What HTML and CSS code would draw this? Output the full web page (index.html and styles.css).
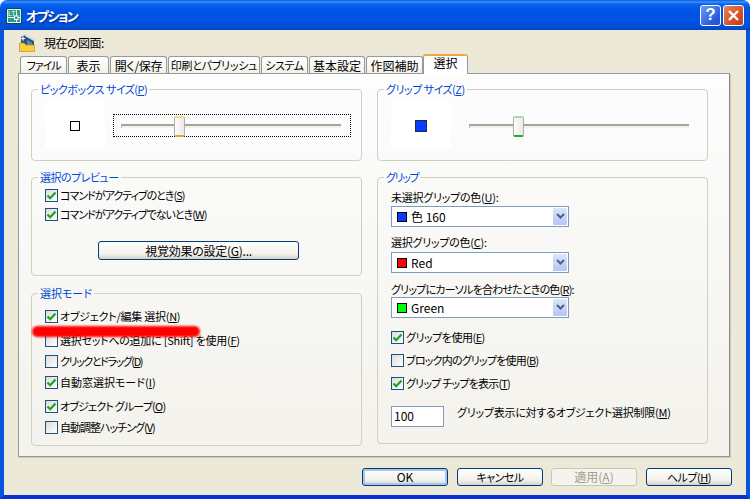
FILE: index.html
```html
<!DOCTYPE html>
<html lang="ja">
<head>
    <meta charset="UTF-8">
    <title>オプション</title>
    <link rel="stylesheet" href="styles.css">
</head>
<body>
    <svg class="defs" width="0" height="0">
        <symbol id="check" viewBox="0 0 11 11">
            <path d="M1.5 5.5 L4.2 8.2 L9.5 2.5" fill="none" stroke="#21a121" stroke-width="2.2"/>
        </symbol>
        <symbol id="chevron" viewBox="0 0 9 7">
            <path d="M1 1 L4.5 4.5 L8 1" fill="none" stroke="#4d6185" stroke-width="2"/>
        </symbol>
    </svg>

    <div class="window">
        <div class="titlebar">
            <svg class="app-icon" width="16" height="16" viewBox="0 0 16 16">
                <rect x="0.5" y="0.5" width="15" height="15" fill="#2a9c8e" stroke="#0f4a5c"/>
                <path d="M1.5 1.5 H14.5 V14.5 H1.5 Z M10.5 1 V15 M1 9.5 H15" fill="none" stroke="#e8f4f0"/>
                <text x="2" y="8" font-size="7" font-family="Liberation Sans" fill="#fff">LT</text>
                <rect x="8.5" y="8" width="3.5" height="3.5" fill="#2a9c8e" stroke="#fff"/>
            </svg>
            <span class="title-text">オプション</span>
            <div class="caption-btn caption-help">?</div>
            <div class="caption-btn caption-close">
                <svg width="13" height="13" viewBox="0 0 13 13">
                    <path d="M2 2 L11 11 M11 2 L2 11" stroke="#fff" stroke-width="2.4"/>
                </svg>
            </div>
        </div>

        <div class="client">
            <div class="drawing-row">
                <svg class="folder-icon" width="16" height="17" viewBox="0 0 16 17">
                    <path d="M2 2 L6 0 L15 5 V11 H2 Z" fill="#2a5580"/>
                    <path d="M6 0.5 L15 5.5" stroke="#d8e0e8" stroke-width="1.4"/>
                    <path d="M4 1.5 V5.5 M2 3.5 H6" stroke="#fff" stroke-width="1.2"/>
                    <path d="M8 5 L13 7.5 V10 H8 Z" fill="#5f86ad"/>
                    <path d="M0.5 8 H5 L7 10 H15.5 V16.5 H0.5 Z" fill="#f7d040" stroke="#b18a12" stroke-width="0.6"/>
                </svg>
                <span class="sp-5">現在の図面:</span>
            </div>

            <div class="tabs">
                <div class="tab small sp-10">ファイル</div>
                <div class="tab">表示</div>
                <div class="tab sp-2">開く/保存</div>
                <div class="tab small sp-2">印刷とパブリッシュ</div>
                <div class="tab small sp-5">システム</div>
                <div class="tab">基本設定</div>
                <div class="tab">作図補助</div>
                <div class="tab tab-active">選択</div>
            </div>

            <div class="panel">
                <div class="column">
                    <fieldset class="group group-size">
                        <legend class="small sp-5">ピックボックス サイズ(<u>P</u>)</legend>
                        <div class="size-body">
                            <div class="preview"><div class="pickbox"></div></div>
                            <div class="slider slider-focus">
                                <div class="track"></div>
                                <div class="thumb thumb-orange" style="left: 60px"></div>
                            </div>
                        </div>
                    </fieldset>

                    <fieldset class="group group-preview">
                        <legend class="small sp-5">選択のプレビュー</legend>
                        <div class="group-body rows">
                            <label class="check-row small sp-10"><span class="box"><svg width="11" height="11"><use href="#check"/></svg></span>コマンドがアクティブのとき(<u>S</u>)</label>
                            <label class="check-row small sp-10"><span class="box"><svg width="11" height="11"><use href="#check"/></svg></span>コマンドがアクティブでないとき(<u>W</u>)</label>
                            <button class="btn btn-effects sp-2">視覚効果の設定(<u>G</u>)...</button>
                        </div>
                    </fieldset>

                    <fieldset class="group group-mode">
                        <legend class="small">選択モード</legend>
                        <div class="group-body mode-rows">
                            <label class="check-row small sp-2"><span class="box"><svg width="11" height="11"><use href="#check"/></svg></span>オブジェクト/編集 選択(<u>N</u>)</label>
                            <label class="check-row small sp-2"><span class="box"></span>選択セットへの追加に [Shift] を使用(<u>F</u>)</label>
                            <label class="check-row small sp-14"><span class="box"></span>クリックとドラッグ(<u>D</u>)</label>
                            <label class="check-row small"><span class="box"><svg width="11" height="11"><use href="#check"/></svg></span>自動窓選択モード(<u>I</u>)</label>
                            <label class="check-row small sp-8"><span class="box"><svg width="11" height="11"><use href="#check"/></svg></span>オブジェクト グループ(<u>O</u>)</label>
                            <label class="check-row small sp-10"><span class="box"></span>自動調整ハッチング(<u>V</u>)</label>
                        </div>
                        <div class="red-mark"></div>
                    </fieldset>
                </div>

                <div class="column">
                    <fieldset class="group group-size">
                        <legend class="small sp-5">グリップ サイズ(<u>Z</u>)</legend>
                        <div class="size-body">
                            <div class="preview"><div class="gripbox"></div></div>
                            <div class="slider slider-plain">
                                <div class="track"></div>
                                <div class="thumb thumb-green" style="left: 51px"></div>
                            </div>
                        </div>
                    </fieldset>

                    <fieldset class="group group-grip">
                        <legend class="small sp-14">グリップ</legend>
                        <div class="group-body">
                            <div class="field">
                                <div class="field-label small sp-2">未選択グリップの色(<u>U</u>):</div>
                                <div class="combo">
                                    <span class="swatch swatch-blue"></span><span>色 160</span>
                                    <span class="drop"><svg width="9" height="7"><use href="#chevron"/></svg></span>
                                </div>
                            </div>
                            <div class="field field-second">
                                <div class="field-label small sp-2">選択グリップの色(<u>C</u>):</div>
                                <div class="combo">
                                    <span class="swatch swatch-red"></span><span>Red</span>
                                    <span class="drop"><svg width="9" height="7"><use href="#chevron"/></svg></span>
                                </div>
                            </div>
                            <div class="field field-third">
                                <div class="field-label small sp-8">グリップにカーソルを合わせたときの色(<u>R</u>):</div>
                                <div class="combo">
                                    <span class="swatch swatch-green"></span><span>Green</span>
                                    <span class="drop"><svg width="9" height="7"><use href="#chevron"/></svg></span>
                                </div>
                            </div>
                            <div class="grip-checks">
                                <label class="check-row small sp-5"><span class="box"><svg width="11" height="11"><use href="#check"/></svg></span>グリップを使用(<u>E</u>)</label>
                                <label class="check-row small sp-8"><span class="box"></span>ブロック内のグリップを使用(<u>B</u>)</label>
                                <label class="check-row small sp-8"><span class="box"><svg width="11" height="11"><use href="#check"/></svg></span>グリップ チップを表示(<u>T</u>)</label>
                            </div>
                            <div class="limit-row">
                                <div class="number-box">100</div>
                                <div class="limit-label small sp-2">グリップ表示に対するオブジェクト選択制限(<u>M</u>)</div>
                            </div>
                        </div>
                    </fieldset>
                </div>
            </div>

            <div class="actions">
                <button class="btn btn-action btn-default">OK</button>
                <button class="btn btn-action small sp-5">キャンセル</button>
                <button class="btn btn-action btn-disabled">適用(<u>A</u>)</button>
                <button class="btn btn-action small sp-5">ヘルプ(<u>H</u>)</button>
            </div>
        </div>
    </div>
</body>
</html>
```

FILE: styles.css
```css
* {
    box-sizing: border-box;
}

body {
    margin: 0;
    background: #fff;
    font-family: "Noto Sans CJK JP", sans-serif;
    font-feature-settings: "palt";
    font-size: 12px;
    line-height: 14px;
    color: #000;
}

.defs {
    position: absolute;
}

/* title bar */
.window {
    width: 750px;
    height: 499px;
    display: flex;
    flex-direction: column;
    overflow: hidden;
}

.titlebar {
    height: 30px;
    flex: none;
    display: flex;
    align-items: center;
    padding: 0 6px 0 6px;
    border-radius: 7px 7px 0 0;
    background: linear-gradient(to bottom, #0a5ae0 0, #3a93ff 2px, #0a63ee 4px, #0055e5 10px, #0054e3 20px, #0050da 26px, #0046c4 30px);
}

.app-icon {
    margin-top: 1px;
}

.title-text {
    margin-left: 4px;
    padding-top: 2px;
    flex: 1;
    color: #fff;
    font-size: 13px;
    font-weight: 700;
    letter-spacing: -1.5px;
    text-shadow: 1px 1px 1px #0a2a80;
}

.caption-btn {
    width: 21px;
    height: 21px;
    display: flex;
    align-items: center;
    justify-content: center;
    border: 1px solid #fff;
    border-radius: 3px;
}

.caption-help {
    background: linear-gradient(135deg, #6f9cf5, #2c5de0 70%, #2450c8);
    color: #fff;
    font-family: "Liberation Sans", sans-serif;
    font-size: 17px;
    font-weight: 700;
}

.caption-close {
    margin-left: 2px;
    background: linear-gradient(135deg, #e8855f, #d5502a 60%, #c03c18);
}

/* dialog body */
.client {
    flex: 1;
    display: flex;
    flex-direction: column;
    padding: 0 16px 8px 14px;
    background: #ece9d8;
    border-left: 4px solid #0855dd;
    border-right: 4px solid #0855dd;
    border-bottom: 4px solid #0831d9;
}

.drawing-row {
    height: 24px;
    display: flex;
    align-items: center;
    margin-left: 1px;
    padding-top: 2px;
}

.folder-icon {
    margin-right: 9px;
}

.tabs {
    height: 19px;
    display: flex;
    align-items: flex-end;
    gap: 1px;
    padding-left: 2px;
}

.tab {
    height: 17px;
    text-align: center;
    border: 1px solid #919b9c;
    border-bottom: none;
    border-radius: 3px 3px 0 0;
    background: linear-gradient(to bottom, #fff, #f3f1e7);
    line-height: 17px;
    white-space: nowrap;
}

.tab:nth-child(1) { width: 47px; }
.tab:nth-child(2) { width: 41px; }
.tab:nth-child(3) { width: 57px; }
.tab:nth-child(4) { width: 92px; }
.tab:nth-child(5) { width: 47px; }
.tab:nth-child(6) { width: 56px; }
.tab:nth-child(7) { width: 57px; }

.tab-active {
    width: 45px;
    height: 20px;
    margin-bottom: -1px;
    margin-left: -1px;
    position: relative;
    z-index: 1;
    background: #fff;
    border-top: 2px solid #f2a93b;
    line-height: 14px;
}

.panel {
    height: 384px;
    display: flex;
    gap: 15px;
    padding: 8px 0 0 12px;
    border: 1px solid #919b9c;
    border-right-color: #8d8d90;
    background: linear-gradient(to bottom, #fdfdfe, #f3f2ec);
    box-shadow: 1px 1px 0 #c9c7ba;
}

.column {
    width: 331px;
    display: flex;
    flex-direction: column;
}

/* group boxes */
.group {
    position: relative;
    margin: 0;
    padding: 0;
    border: 1px solid #d0d0bf;
    border-radius: 4px;
    min-width: 0;
}

.group legend {
    margin-left: 6px;
    padding: 0 2px;
    color: #0046d5;
}

.group-size {
    height: 79px;
}

.group-preview {
    height: 106px;
    margin-top: 9px;
}

.group-mode {
    height: 160px;
    margin-top: 10px;
}

.group-grip {
    height: 274px;
    margin-top: 9px;
}

.group-body {
    padding: 6px 13px 0;
}

.size-body {
    display: flex;
    align-items: center;
    padding: 6px 13px 0;
}

.preview {
    width: 60px;
    height: 47px;
    flex: none;
    display: flex;
    align-items: center;
    justify-content: center;
    background: #fff;
}

.pickbox {
    width: 10px;
    height: 10px;
    border: 1px solid #000;
}

.gripbox {
    width: 12px;
    height: 12px;
    background: #0a3cff;
    border: 1px solid #1c2a50;
}

.slider {
    width: 238px;
    height: 23px;
    flex: none;
    display: flex;
    align-items: center;
    position: relative;
    padding-left: 7px;
    border: 1px solid transparent;
}

.slider-focus {
    margin-left: 8px;
    border: 1px dotted #000;
}

.slider-plain {
    margin-left: 10px;
}

.track {
    width: 220px;
    height: 4px;
    border-top: 2px solid #a3a29c;
    border-left: 1px solid #bdbcb6;
    background: #f2f1ea;
}

.thumb {
    position: absolute;
    top: 1px;
    width: 11px;
    height: 21px;
    border: 1px solid #a8b0b0;
    border-radius: 2px;
    background: linear-gradient(to right, #fdfdfb, #eceae2);
}

.thumb-orange {
    border-top: 2px solid #f8d78a;
    border-bottom: 2px solid #e8a030;
}

.thumb-green {
    border-top: 2px solid #a8d8a8;
    border-bottom: 2px solid #22ac2c;
}

/* check boxes */
.check-row {
    height: 13px;
    display: flex;
    align-items: flex-start;
    line-height: 12px;
    white-space: nowrap;
}

.box {
    width: 13px;
    height: 13px;
    margin-right: 2px;
    flex: none;
    display: flex;
    align-items: center;
    justify-content: center;
    border: 1px solid #1c5180;
    background: linear-gradient(135deg, #dcdcd7, #fff);
}

.rows {
    padding-top: 5px;
}

.rows .check-row + .check-row {
    margin-top: 6px;
}

.mode-rows {
    padding-top: 10px;
}

.mode-rows .check-row + .check-row {
    margin-top: 8px;
}

.mode-rows .check-row:nth-child(2),
.mode-rows .check-row:nth-child(5) {
    margin-top: 11px;
}

.red-mark {
    position: absolute;
    left: 0;
    top: 26px;
    width: 168px;
    height: 11px;
    border-radius: 6px;
    background: #f00;
    filter: blur(0.8px);
}

/* buttons */
.btn {
    display: block;
    padding: 0;
    border: 1px solid #003c74;
    border-radius: 3px;
    background: linear-gradient(to bottom, #fff, #f2f1ea 70%, #d6d0c5);
    font-family: inherit;
    font-feature-settings: inherit;
    font-size: 12px;
    line-height: inherit;
    color: #000;
}

.btn-effects {
    width: 201px;
    height: 19px;
    margin: 20px 0 0 53px;
}

.actions {
    display: flex;
    justify-content: flex-end;
    gap: 9px;
    margin-top: 11px;
    margin-right: -2px;
}

.btn-action {
    width: 86px;
    height: 18px;
}

.btn-default {
    box-shadow: inset 0 0 0 2px #a9c4ee;
}

.btn-disabled {
    margin-left: -1px;
    border-color: #c9c7ba;
    background: #f4f3ee;
    color: #a19d8c;
}

/* combos and fields */
.field {
    display: flex;
    flex-direction: column;
    gap: 2px;
}

.field-second {
    margin-top: 8px;
    gap: 3px;
}

.field-third {
    margin-top: 9px;
    gap: 1px;
}

.combo {
    width: 178px;
    height: 21px;
    display: flex;
    align-items: center;
    padding-left: 5px;
    position: relative;
    border: 1px solid #7f9db9;
    background: #fff;
}

.swatch {
    width: 10px;
    height: 10px;
    margin-right: 4px;
    border: 1px solid #000;
}

.swatch-blue { background: #0a3cff; }
.swatch-red { background: #f00; }
.swatch-green { background: #0f0; }

.drop {
    width: 16px;
    height: 19px;
    margin-left: auto;
    display: flex;
    align-items: center;
    justify-content: center;
    border: 1px solid #fff;
    border-radius: 2px;
    background: linear-gradient(to bottom, #dbe5fc, #b3c6f5);
}

.grip-checks {
    display: flex;
    flex-direction: column;
    gap: 10px;
    margin-top: 13px;
}

.limit-row {
    display: flex;
    margin-top: 16px;
}

.number-box {
    width: 53px;
    height: 21px;
    padding: 2px 0 0 2px;
    border: 1px solid #7f9db9;
    background: #fff;
}

.limit-label {
    margin-left: 13px;
    margin-top: -1px;
    white-space: nowrap;
}

/* kana in the original font are narrow, so labels get squeezed */
.small { font-size: 11px; }
.sp-2 { letter-spacing: -0.25px; }
.sp-5 { letter-spacing: -0.5px; }
.sp-8 { letter-spacing: -0.8px; }
.sp-10 { letter-spacing: -1px; }
.sp-14 { letter-spacing: -1.4px; }
```
